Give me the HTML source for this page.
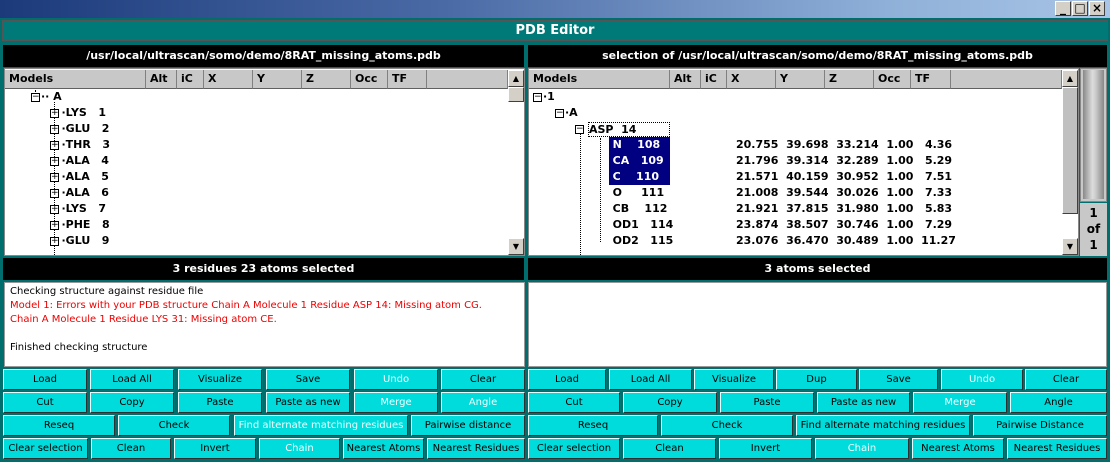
<!DOCTYPE html>
<html><head><meta charset="utf-8"><style>
*{box-sizing:border-box;margin:0;padding:0}
body{width:1110px;height:462px;overflow:hidden;background:#006e6c;font-family:"DejaVu Sans","Liberation Sans",sans-serif;position:relative}
.a{position:absolute}
.tb{left:0;top:0;width:1110px;height:18px;background:linear-gradient(90deg,#1c3a7a,#4a6aa6 40%,#8fb0d8 80%,#a8c4e6)}
.wb{top:1px;width:16px;height:15px;background:#d4d0c8;border:1px solid;border-color:#fff #404040 #404040 #fff;font:bold 12px "DejaVu Sans";text-align:center;line-height:13px;color:#000}
.title{left:2px;top:20px;width:1106px;height:21px;background:#007a78;border:1px solid #555;color:#fff;font:bold 13px "DejaVu Sans";text-align:center;line-height:20px}
.bh{background:#000;color:#fff;font:bold 11px "DejaVu Sans";text-align:center;line-height:22px;height:22px}
.tree{background:#fff;border:1px solid #888}
.hd{top:70px;height:19px;background:#c8c8c8;border-right:1px solid #808080;border-bottom:1px solid #606060;font:bold 11px "DejaVu Sans";line-height:18px;padding-left:4px}
.r{font:bold 11px "DejaVu Sans";line-height:16px;height:16px;white-space:pre}
.sb{background:#c8c8c8}
.ar{width:16px;height:17px;background:#d4d0c8;border:1px solid;border-color:#fff #404040 #404040 #fff;font-size:8px;text-align:center;line-height:15px}
.txt{background:#fff;border:1px solid #999;font:10px "DejaVu Sans";line-height:14px;padding:2px 5px;white-space:nowrap}
.b{height:21px;background:#00dcdc;border:1px solid;border-color:#e8ffff #303030 #303030 #e8ffff;font:10px "DejaVu Sans";text-align:center;line-height:19px;color:#000;white-space:nowrap;overflow:hidden}
.d{color:#f0ffff}
.sel{background:#000080;color:#fff}
.bx{width:9px;height:9px;border:1px solid #000;background:#fff;font-size:9px;line-height:7px;text-align:center}
</style></head><body>
<div class="a tb"></div>
<div class="a wb" style="left:1055px">_</div>
<div class="a wb" style="left:1072px">□</div>
<div class="a wb" style="left:1089px">×</div>
<div class="a title">PDB Editor</div>

<div class="a bh" style="left:3px;top:45px;width:521px">/usr/local/ultrascan/somo/demo/8RAT_missing_atoms.pdb</div>
<div class="a bh" style="left:528px;top:45px;width:579px">selection of /usr/local/ultrascan/somo/demo/8RAT_missing_atoms.pdb</div>

<!-- left tree -->
<div class="a tree" style="left:4px;top:68px;width:521px;height:188px"></div>
<div class="a hd" style="left:5px;width:141px">Models</div>
<div class="a hd" style="left:146px;width:31px">Alt</div>
<div class="a hd" style="left:177px;width:27px">iC</div>
<div class="a hd" style="left:204px;width:49px">X</div>
<div class="a hd" style="left:253px;width:49px">Y</div>
<div class="a hd" style="left:302px;width:49px">Z</div>
<div class="a hd" style="left:351px;width:37px">Occ</div>
<div class="a hd" style="left:388px;width:39px">TF</div>
<div class="a hd" style="left:427px;width:81px"></div>
<div class="a sb" style="left:508px;top:70px;width:16px;height:185px;background:#fff"></div>
<div class="a ar" style="left:508px;top:70px">▲</div>
<div class="a ar" style="left:508px;top:87px;height:15px"></div>
<div class="a ar" style="left:508px;top:238px">▼</div>
<div class="a" style="left:35px;top:90px;height:8px;border-left:1px dotted #000"></div>
<div class="a bx" style="left:31px;top:93px">−</div><div class="a r" style="left:41px;top:89px">·· A</div>
<div class="a" style="left:54px;top:102px;height:153px;border-left:1px dotted #000"></div>
<div class="a" style="left:50px;top:105px">
<div class="r">   ·LYS   1</div><div class="r">   ·GLU   2</div><div class="r">   ·THR   3</div><div class="r">   ·ALA   4</div><div class="r">   ·ALA   5</div><div class="r">   ·ALA   6</div><div class="r">   ·LYS   7</div><div class="r">   ·PHE   8</div><div class="r">   ·GLU   9</div>
</div>
<div class="a bx" style="left:50px;top:109px">+</div>
<div class="a bx" style="left:50px;top:125px">+</div>
<div class="a bx" style="left:50px;top:141px">+</div>
<div class="a bx" style="left:50px;top:157px">+</div>
<div class="a bx" style="left:50px;top:173px">+</div>
<div class="a bx" style="left:50px;top:189px">+</div>
<div class="a bx" style="left:50px;top:205px">+</div>
<div class="a bx" style="left:50px;top:221px">+</div>
<div class="a bx" style="left:50px;top:237px">+</div>

<!-- right tree -->
<div class="a tree" style="left:528px;top:68px;width:551px;height:188px"></div>
<div class="a hd" style="left:529px;width:141px">Models</div>
<div class="a hd" style="left:670px;width:31px">Alt</div>
<div class="a hd" style="left:701px;width:26px">iC</div>
<div class="a hd" style="left:727px;width:49px">X</div>
<div class="a hd" style="left:776px;width:49px">Y</div>
<div class="a hd" style="left:825px;width:49px">Z</div>
<div class="a hd" style="left:874px;width:37px">Occ</div>
<div class="a hd" style="left:911px;width:40px">TF</div>
<div class="a hd" style="left:951px;width:111px"></div>
<div class="a" style="left:1062px;top:70px;width:16px;height:185px;background:#c8c8c8"></div>
<div class="a ar" style="left:1062px;top:70px">▲</div>
<div class="a ar" style="left:1062px;top:87px;height:127px;background:#c0c0c0"></div>
<div class="a" style="left:1062px;top:214px;width:16px;height:24px;background:#fff"></div>
<div class="a ar" style="left:1062px;top:238px">▼</div>
<div class="a bx" style="left:533px;top:93px">−</div><div class="a r" style="left:543px;top:89px">·1</div>
<div class="a bx" style="left:555px;top:109px">−</div><div class="a r" style="left:565px;top:105px">·A</div>
<div class="a bx" style="left:575px;top:125px">−</div><div class="a r" style="left:588px;top:122px;border:1px dotted #000;height:15px;line-height:14px;width:82px">ASP  14</div>
<div class="a" style="left:580px;top:134px;height:121px;border-left:1px dotted #000"></div>
<div class="a" style="left:600px;top:138px;height:104px;border-left:1px dotted #000"></div>
<div class="a sel" style="left:609px;top:137px;width:61px;height:48px"></div>
<div class="a" style="left:605px;top:137px">
<div class="r" style="color:#fff">  N    108</div><div class="r" style="color:#fff">  CA   109</div><div class="r" style="color:#fff">  C    110</div><div class="r">  O     111</div><div class="r">  CB    112</div><div class="r">  OD1   114</div><div class="r">  OD2   115</div>
</div>
<div class="a" style="left:736px;top:137px">
<div class="r">20.755  39.698  33.214  1.00   4.36</div>
<div class="r">21.796  39.314  32.289  1.00   5.29</div>
<div class="r">21.571  40.159  30.952  1.00   7.51</div>
<div class="r">21.008  39.544  30.026  1.00   7.33</div>
<div class="r">21.921  37.815  31.980  1.00   5.83</div>
<div class="r">23.874  38.507  30.746  1.00   7.29</div>
<div class="r">23.076  36.470  30.489  1.00  11.27</div>
</div>
<div class="a" style="left:1080px;top:68px;width:27px;height:134px;background:#c8c8c8;border:1px solid #888"></div>
<div class="a" style="left:1083px;top:70px;width:21px;height:129px;background:linear-gradient(90deg,#888,#ddd 45%,#ccc 60%,#888)"></div>
<div class="a" style="left:1080px;top:203px;width:27px;height:53px;background:#c8c8c8;font:bold 12px 'DejaVu Sans';line-height:16px;text-align:center;padding-top:2px">1<br>of<br>1</div>

<div class="a bh" style="left:3px;top:258px;width:521px">3 residues 23 atoms selected</div>
<div class="a bh" style="left:528px;top:258px;width:579px">3 atoms selected</div>

<div class="a txt" style="left:4px;top:282px;width:521px;height:85px">Checking structure against residue file<br><span style="color:#e00">Model 1: Errors with your PDB structure Chain A Molecule 1 Residue ASP 14: Missing atom CG.<br>Chain A Molecule 1 Residue LYS 31: Missing atom CE.</span><br><br>Finished checking structure</div>
<div class="a txt" style="left:528px;top:282px;width:579px;height:85px"></div>

<!-- left buttons -->
<div class="a b" style="left:3px;top:369px;width:84px">Load</div>
<div class="a b" style="left:90px;top:369px;width:84px">Load All</div>
<div class="a b" style="left:178px;top:369px;width:84px">Visualize</div>
<div class="a b" style="left:266px;top:369px;width:84px">Save</div>
<div class="a b d" style="left:354px;top:369px;width:84px">Undo</div>
<div class="a b" style="left:441px;top:369px;width:84px">Clear</div>
<div class="a b" style="left:3px;top:392px;width:84px">Cut</div>
<div class="a b" style="left:90px;top:392px;width:84px">Copy</div>
<div class="a b" style="left:178px;top:392px;width:84px">Paste</div>
<div class="a b" style="left:266px;top:392px;width:84px">Paste as new</div>
<div class="a b d" style="left:354px;top:392px;width:84px">Merge</div>
<div class="a b d" style="left:441px;top:392px;width:84px">Angle</div>
<div class="a b" style="left:3px;top:415px;width:112px">Reseq</div>
<div class="a b" style="left:118px;top:415px;width:112px">Check</div>
<div class="a b d" style="left:234px;top:415px;width:174px">Find alternate matching residues</div>
<div class="a b" style="left:411px;top:415px;width:114px">Pairwise distance</div>
<div class="a b" style="left:3px;top:438px;width:85px">Clear selection</div>
<div class="a b" style="left:91px;top:438px;width:80px">Clean</div>
<div class="a b" style="left:174px;top:438px;width:82px">Invert</div>
<div class="a b d" style="left:259px;top:438px;width:81px">Chain</div>
<div class="a b" style="left:343px;top:438px;width:81px">Nearest Atoms</div>
<div class="a b" style="left:427px;top:438px;width:98px">Nearest Residues</div>

<!-- right buttons -->
<div class="a b" style="left:528px;top:369px;width:78px">Load</div>
<div class="a b" style="left:609px;top:369px;width:83px">Load All</div>
<div class="a b" style="left:694px;top:369px;width:80px">Visualize</div>
<div class="a b" style="left:776px;top:369px;width:81px">Dup</div>
<div class="a b" style="left:859px;top:369px;width:79px">Save</div>
<div class="a b d" style="left:941px;top:369px;width:82px">Undo</div>
<div class="a b" style="left:1025px;top:369px;width:82px">Clear</div>
<div class="a b" style="left:528px;top:392px;width:92px">Cut</div>
<div class="a b" style="left:623px;top:392px;width:94px">Copy</div>
<div class="a b" style="left:720px;top:392px;width:94px">Paste</div>
<div class="a b" style="left:817px;top:392px;width:93px">Paste as new</div>
<div class="a b d" style="left:913px;top:392px;width:94px">Merge</div>
<div class="a b" style="left:1010px;top:392px;width:97px">Angle</div>
<div class="a b" style="left:528px;top:415px;width:130px">Reseq</div>
<div class="a b" style="left:661px;top:415px;width:132px">Check</div>
<div class="a b" style="left:796px;top:415px;width:174px">Find alternate matching residues</div>
<div class="a b" style="left:973px;top:415px;width:134px">Pairwise Distance</div>
<div class="a b" style="left:528px;top:438px;width:92px">Clear selection</div>
<div class="a b" style="left:623px;top:438px;width:93px">Clean</div>
<div class="a b" style="left:719px;top:438px;width:93px">Invert</div>
<div class="a b d" style="left:815px;top:438px;width:94px">Chain</div>
<div class="a b" style="left:912px;top:438px;width:92px">Nearest Atoms</div>
<div class="a b" style="left:1007px;top:438px;width:100px">Nearest Residues</div>
</body></html>
